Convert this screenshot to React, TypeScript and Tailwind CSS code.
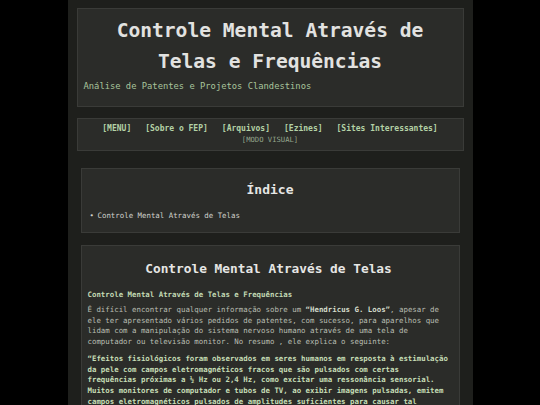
import React from "react";

const mono = { fontFamily: '"DejaVu Sans Mono", "Liberation Mono", monospace' };

export default function App() {
  return (
    <div className="min-h-screen bg-black" style={mono}>
      <div className="mx-auto w-[405px] min-h-screen bg-[#1e1f1c] pt-[8px] pb-[20px]">
        {/* Header */}
        <div className="mx-[9px] border border-[#3a3b38] bg-[#2b2c29] px-[6px] pt-[6px] pb-[13px]">
          <h1 className="text-center text-[19.6px] leading-[31px] font-bold text-[#e2e2e0]">
            Controle Mental Através de Telas e Frequências
          </h1>
          <p className="mt-[3px] text-[8.8px] leading-[13px] text-[#a8c49c]">
            Análise de Patentes e Projetos Clandestinos
          </p>
        </div>

        {/* Nav */}
        <div className="mx-[9px] mt-[11px] border border-[#3a3b38] bg-[#2b2c29] pt-[4px] pb-[5px] text-center">
          <div className="flex justify-center gap-x-[14px] text-[8px] leading-[11px] font-bold text-[#b4d2a6]">
            <span>[MENU]</span>
            <span>[Sobre o FEP]</span>
            <span>[Arquivos]</span>
            <span>[Ezines]</span>
            <span>[Sites Interessantes]</span>
          </div>
          <div className="text-[7.2px] leading-[11px] text-[#94a68c]">[MODO VISUAL]</div>
        </div>

        {/* Index */}
        <div className="mx-[13px] mt-[17px] border border-[#3a3b38] bg-[#2b2c29] px-[8px] pt-[12px] pb-[11px]">
          <h2 className="text-center text-[13px] leading-[18px] font-bold text-[#e6e6e4]">Índice</h2>
          <ul className="mt-[11px] text-[7.4px] leading-[11px] text-[#d0d2cc]">
            <li className="flex">
              <span className="w-[8px]">•</span>
              <span>Controle Mental Através de Telas</span>
            </li>
          </ul>
        </div>

        {/* Content */}
        <div className="mx-[13px] mt-[12px] border border-[#3a3b38] bg-[#2b2c29] pl-[6px] pr-[9px] pt-[14px] pb-[12px]">
          <h2 className="text-center text-[12.8px] leading-[18px] font-bold text-[#e6e6e4]">
            Controle Mental Através de Telas
          </h2>
          <h3 className="mt-[11px] text-[7.4px] leading-[11px] font-bold text-[#c2dab4]">
            Controle Mental Através de Telas e Frequências
          </h3>
          <p className="mt-[5px] text-[7.4px] leading-[10.7px] text-[#b9beb2]">
            É difícil encontrar qualquer informação sobre um{" "}
            <b className="text-[#d4dccb]">“Hendricus G. Loos”</b>, apesar de ele ter apresentado vários pedidos
            de patentes, com sucesso, para aparelhos que lidam com a manipulação do sistema nervoso humano através
            de uma tela de computador ou televisão monitor. No resumo , ele explica o seguinte:
          </p>
          <p className="mt-[6px] text-[7.4px] leading-[10.8px] font-bold text-[#c6deb6]">
            “Efeitos fisiológicos foram observados em seres humanos em resposta à estimulação da pele com campos
            eletromagnéticos fracos que são pulsados com certas frequências próximas a ½ Hz ou 2,4 Hz, como
            excitar uma ressonância sensorial. Muitos monitores de computador e tubos de TV, ao exibir imagens
            pulsadas, emitem campos eletromagnéticos pulsados de amplitudes suficientes para causar tal
            excitação. Portanto, é possível manipular o sistema nervoso de um sujeito pulsando imagens exibidas
            em um monitor de computador ou aparelho de TV próximo.”
          </p>
        </div>
      </div>
    </div>
  );
}
